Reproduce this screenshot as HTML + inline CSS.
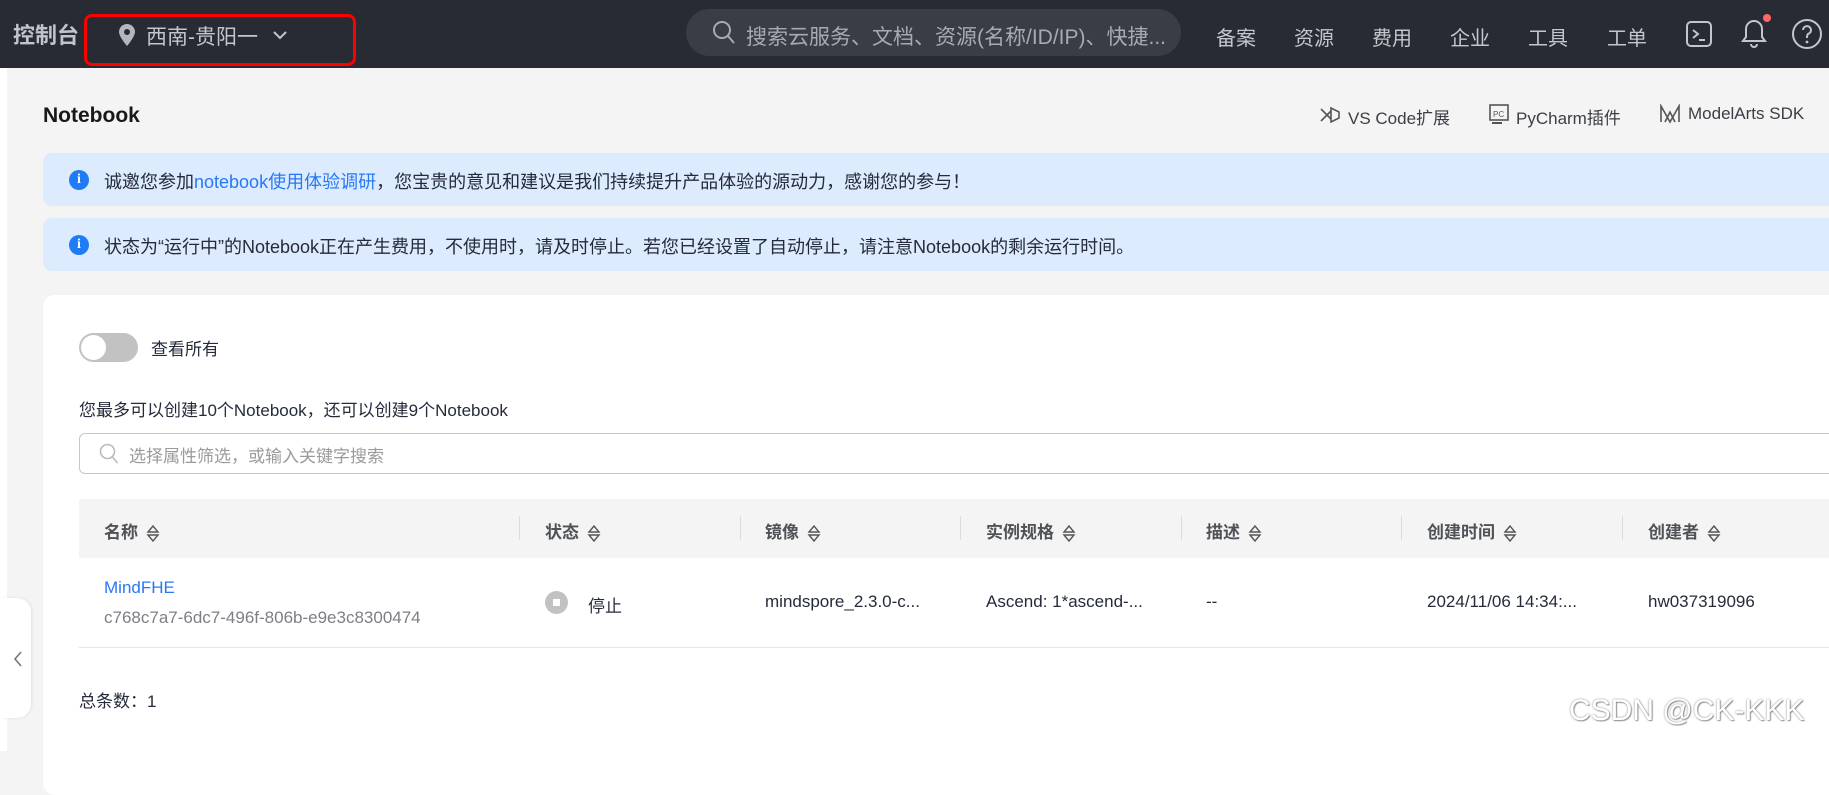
<!DOCTYPE html>
<html><head><meta charset="utf-8"><style>
*{margin:0;padding:0;box-sizing:border-box}
body{width:1829px;height:751px;overflow:hidden;background:#f4f4f4;font-family:"Liberation Sans","Noto Sans CJK SC",sans-serif;position:relative;color:#252b3a}
.a{position:absolute;white-space:nowrap}
.hdr{position:absolute;left:0;top:0;width:1829px;height:68px;background:#282b33}
.nav{font-size:20px;color:#c3c6cc;top:22px}
.th{font-size:17px;font-weight:bold;color:#4f5257;top:518px}
.sep{position:absolute;top:516px;width:1px;height:24px;background:#dcdcdc}
.td{font-size:17px;color:#252b3a;top:592px}
.sort{display:inline-block;vertical-align:middle;margin-left:8px}
.ban{position:absolute;left:43px;width:1800px;height:53px;background:#dcebfe;border-radius:9px}
.bi{position:absolute;left:69px;width:20px;height:20px;border-radius:50%;background:#1f7cf5;color:#fff;font:bold 14px "Liberation Serif",serif;text-align:center;line-height:20px}
.bt{font-size:18px;color:#252b3a}
</style></head><body>
<div class="a" style="left:0;top:68px;width:7px;height:683px;background:#fff"></div>
<div class="hdr"></div>
<div class="a" style="left:13px;top:18px;font-size:22px;font-weight:bold;color:#c0c4cc">控制台</div>
<div class="a" style="left:84px;top:14px;width:272px;height:52px;border:3px solid #f00;border-radius:8px"></div>
<svg class="a" style="left:119px;top:24px" width="16" height="22" viewBox="0 0 16 22"><path d="M8 0C3.6 0 0 3.5 0 7.8 0 13 8 22 8 22s8-9 8-14.2C16 3.5 12.4 0 8 0z" fill="#b3b6bd"/><circle cx="8" cy="8" r="3" fill="#282b33"/></svg>
<div class="a" style="left:146px;top:21px;font-size:21px;color:#c3c6cc">西南-贵阳一</div>
<svg class="a" style="left:272px;top:30px" width="16" height="10"><path d="M2 2l6 6 6-6" stroke="#c3c6cc" stroke-width="2" fill="none"/></svg>
<div class="a" style="left:686px;top:9px;width:495px;height:47px;border-radius:24px;background:#3a3d46"></div>
<svg class="a" style="left:712px;top:20px" width="24" height="26"><circle cx="10" cy="10" r="8" stroke="#a7aab0" stroke-width="2" fill="none"/><path d="M16 16l6 7" stroke="#a7aab0" stroke-width="2"/></svg>
<div class="a" style="left:746px;top:21px;font-size:21px;color:#a7aab0">搜索云服务、文档、资源(名称/ID/IP)、快捷...</div>
<div class="a nav" style="left:1216px">备案</div>
<div class="a nav" style="left:1294px">资源</div>
<div class="a nav" style="left:1372px">费用</div>
<div class="a nav" style="left:1450px">企业</div>
<div class="a nav" style="left:1528px">工具</div>
<div class="a nav" style="left:1607px">工单</div>
<svg class="a" style="left:1685px;top:20px" width="28" height="28"><rect x="2" y="2" width="24" height="24" rx="4" stroke="#c3c6cc" stroke-width="2" fill="none"/><path d="M8 10l5 4-5 4M14 20h6" stroke="#c3c6cc" stroke-width="2" fill="none"/></svg>
<svg class="a" style="left:1738px;top:14px" width="34" height="36"><path d="M5 27h22l-3-4V15a8 8 0 0 0-16 0v8z" stroke="#c3c6cc" stroke-width="2" fill="none"/><path d="M13 30a3 3 0 0 0 6 0" stroke="#c3c6cc" stroke-width="2" fill="none"/><circle cx="29" cy="4" r="4" fill="#f66"/></svg>
<svg class="a" style="left:1791px;top:18px" width="32" height="32"><circle cx="16" cy="16" r="14" stroke="#c3c6cc" stroke-width="2" fill="none"/><path d="M12 12a4 4 0 1 1 5 4c-1 1-1 2-1 4" stroke="#c3c6cc" stroke-width="2" fill="none"/><circle cx="16" cy="24" r="1.4" fill="#c3c6cc"/></svg>

<div class="a" style="left:43px;top:104px;font-size:21px;font-weight:bold;color:#191919">Notebook</div>
<svg class="a" style="left:1319px;top:105px" width="22" height="20"><path d="M2 4l10 10M2 16l10-10M12 3v14l8-4V7z" stroke="#555" stroke-width="1.6" fill="none"/></svg>
<div class="a" style="left:1348px;top:104px;font-size:17px;color:#3b3e45">VS Code扩展</div>
<svg class="a" style="left:1488px;top:103px" width="22" height="22"><rect x="2" y="2" width="18" height="15" stroke="#555" stroke-width="1.6" fill="none"/><text x="5" y="14" font-size="8" font-family="Liberation Sans" fill="#555">PC</text><path d="M4 20h10" stroke="#555" stroke-width="2"/></svg>
<div class="a" style="left:1516px;top:104px;font-size:17px;color:#3b3e45">PyCharm插件</div>
<svg class="a" style="left:1659px;top:104px" width="22" height="20"><path d="M2 18V2l9 16 9-16v16M6 18l5-10 5 10" stroke="#555" stroke-width="1.6" fill="none"/></svg>
<div class="a" style="left:1688px;top:104px;font-size:17px;color:#3b3e45">ModelArts SDK</div>

<div class="ban" style="top:153px"></div>
<div class="bi" style="top:170px">i</div>
<div class="a bt" style="left:104px;top:168px">诚邀您参加<span style="color:#2878f5">notebook使用体验调研</span>，您宝贵的意见和建议是我们持续提升产品体验的源动力，感谢您的参与！</div>
<div class="ban" style="top:218px"></div>
<div class="bi" style="top:235px">i</div>
<div class="a bt" style="left:104px;top:233px">状态为“运行中”的Notebook正在产生费用，不使用时，请及时停止。若您已经设置了自动停止，请注意Notebook的剩余运行时间。</div>

<div class="a" style="left:43px;top:295px;width:1820px;height:500px;background:#fff;border-radius:12px"></div>
<div class="a" style="left:79px;top:333px;width:59px;height:29px;border-radius:15px;background:#c2c2c2"></div>
<div class="a" style="left:81px;top:335px;width:25px;height:25px;border-radius:50%;background:#fff"></div>
<div class="a" style="left:151px;top:335px;font-size:17px;color:#252b3a">查看所有</div>
<div class="a" style="left:79px;top:396px;font-size:17px;color:#252b3a">您最多可以创建10个Notebook，还可以创建9个Notebook</div>
<div class="a" style="left:79px;top:433px;width:1800px;height:41px;border:1.5px solid #c7c7c7;border-radius:6px;background:#fff"></div>
<svg class="a" style="left:99px;top:443px" width="20" height="22"><circle cx="8.5" cy="8.5" r="7" stroke="#bbb" stroke-width="1.6" fill="none"/><path d="M13.5 14l5 6" stroke="#bbb" stroke-width="1.6"/></svg>
<div class="a" style="left:129px;top:442px;font-size:17px;color:#9a9a9a">选择属性筛选，或输入关键字搜索</div>

<div class="a" style="left:79px;top:499px;width:1800px;height:59px;background:#f4f4f4"></div>
<div class="a" style="left:79px;top:647px;width:1800px;height:1px;background:#e6e6e6"></div>
<svg width="0" height="0" style="position:absolute"><defs><g id="s"><path d="M2 8l5-6 5 6z M2 11l5 6 5-6z" stroke="#555" stroke-width="1.4" fill="none"/></g></defs></svg>
<div class="a th" style="left:104px">名称<svg class="sort" width="14" height="19"><use href="#s"/></svg></div>
<div class="sep" style="left:519px"></div>
<div class="a th" style="left:545px">状态<svg class="sort" width="14" height="19"><use href="#s"/></svg></div>
<div class="sep" style="left:740px"></div>
<div class="a th" style="left:765px">镜像<svg class="sort" width="14" height="19"><use href="#s"/></svg></div>
<div class="sep" style="left:960px"></div>
<div class="a th" style="left:986px">实例规格<svg class="sort" width="14" height="19"><use href="#s"/></svg></div>
<div class="sep" style="left:1181px"></div>
<div class="a th" style="left:1206px">描述<svg class="sort" width="14" height="19"><use href="#s"/></svg></div>
<div class="sep" style="left:1401px"></div>
<div class="a th" style="left:1427px">创建时间<svg class="sort" width="14" height="19"><use href="#s"/></svg></div>
<div class="sep" style="left:1622px"></div>
<div class="a th" style="left:1648px">创建者<svg class="sort" width="14" height="19"><use href="#s"/></svg></div>

<div class="a" style="left:104px;top:578px;font-size:17px;color:#2878f5">MindFHE</div>
<div class="a" style="left:104px;top:608px;font-size:17px;color:#7c7f85">c768c7a7-6dc7-496f-806b-e9e3c8300474</div>
<div class="a" style="left:545px;top:591px;width:23px;height:23px;border-radius:50%;background:#c2c2c2"></div>
<div class="a" style="left:553px;top:599px;width:7px;height:7px;background:#fff"></div>
<div class="a td" style="left:588px">停止</div>
<div class="a td" style="left:765px">mindspore_2.3.0-c...</div>
<div class="a td" style="left:986px">Ascend: 1*ascend-...</div>
<div class="a td" style="left:1206px">--</div>
<div class="a td" style="left:1427px">2024/11/06 14:34:...</div>
<div class="a td" style="left:1648px">hw037319096</div>
<div class="a" style="left:79px;top:687px;font-size:17px;color:#252b3a">总条数：1</div>

<div class="a" style="left:0;top:598px;width:31px;height:120px;background:#fff;border-radius:0 14px 14px 0;box-shadow:1px 0 3px rgba(0,0,0,.08)"></div>
<svg class="a" style="left:13px;top:650px" width="10" height="18"><path d="M8 2L2 9l6 7" stroke="#777" stroke-width="1.6" fill="none"/></svg>
<div class="a" style="left:1569px;top:694px;font-size:30px;color:#fff;text-shadow:0 0 2px #888,1px 1px 1px #999">CSDN @CK-KKK</div>
</body></html>
